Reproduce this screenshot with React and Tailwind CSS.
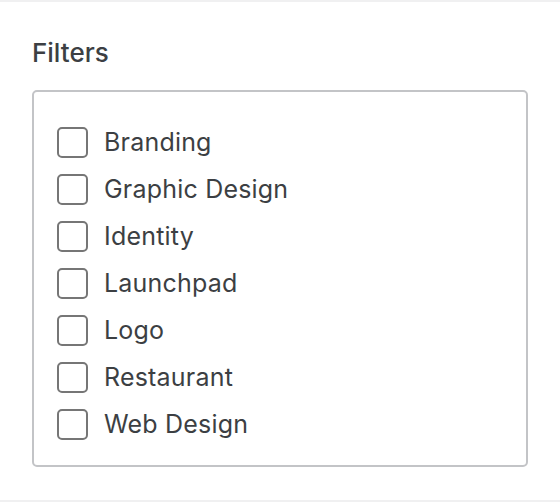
import React from 'react';

const filters = ['Branding', 'Graphic Design', 'Identity', 'Launchpad', 'Logo', 'Restaurant', 'Web Design'];

const FilterItem = ({ label }) => (
  <label className="flex items-center gap-4 h-[47px]">
    <span className="ml-[1px] w-[31px] h-[31px] shrink-0 rounded-[5px] border-2 border-[#767676] bg-white" />
    <span className="text-[25px] leading-none tracking-[0.2px] text-[#3c3f43]">{label}</span>
  </label>
);

const App = () => {
  return (
    <div className="w-[560px] h-[502px] bg-white font-['Inter',sans-serif] flex flex-col">
      <div className="h-[2px] bg-[#f0f0f1]" />
      <div className="flex-1 px-[32px] pt-[35px]">
        <h2 className="text-[26px] leading-[32px] font-medium text-[#3c3f43]">Filters</h2>
        <div className="mt-[21px] h-[377px] rounded-[5px] border-2 border-[#c3c4c7] px-[22px] pt-[27px]">
          {filters.map((f) => (
            <FilterItem key={f} label={f} />
          ))}
        </div>
      </div>
      <div className="h-[2px] bg-[#f0f0f1]" />
    </div>
  );
};

export default App;
